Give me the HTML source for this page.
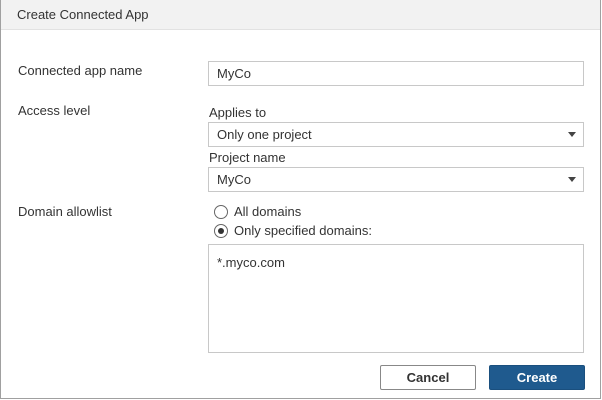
<!DOCTYPE html>
<html><head><style>
*{box-sizing:border-box;margin:0;padding:0}
body{width:602px;height:400px;background:#fff;font-family:"Liberation Sans",sans-serif;font-size:13px;color:#333;position:relative;overflow:hidden}
.frame{position:absolute;left:0;top:0;width:601px;height:399px;border:1px solid #a0a0a0;border-top:none}
.hdr{position:absolute;left:0;top:0;width:601px;height:30px;background:#f2f2f2;border-bottom:1px solid #e2e2e2}
.t{position:absolute;white-space:nowrap}
.box{position:absolute;border:1px solid #c8c8c8;background:#fff;padding-left:8px;line-height:22px}
.arr{position:absolute;right:7px;top:9px;width:0;height:0;border-left:4px solid transparent;border-right:4px solid transparent;border-top:5px solid #444}
.radio{position:absolute;width:14px;height:14px;border:1px solid #666;border-radius:50%;background:#fff}
.btn{position:absolute;height:25px;line-height:23px;text-align:center;font-weight:bold;font-size:13px;border-radius:2px}
</style></head><body>
<div class="hdr"></div>
<div class="frame"></div>
<div class="t" style="left:17px;top:7px">Create Connected App</div>
<div class="t" style="left:18px;top:63px">Connected app name</div>
<div class="box" style="left:208px;top:61px;width:376px;height:25px;padding-top:1px">MyCo</div>
<div class="t" style="left:18px;top:103px">Access level</div>
<div class="t" style="left:209px;top:105px">Applies to</div>
<div class="box" style="left:208px;top:122px;width:376px;height:25px;padding-top:1px">Only one project<div class="arr"></div></div>
<div class="t" style="left:209px;top:150px">Project name</div>
<div class="box" style="left:208px;top:167px;width:376px;height:25px;padding-top:1px">MyCo<div class="arr"></div></div>
<div class="t" style="left:18px;top:204px">Domain allowlist</div>
<div class="radio" style="left:214px;top:205px"></div>
<div class="t" style="left:234px;top:204px">All domains</div>
<div class="radio" style="left:214px;top:224px"><div style="position:absolute;left:3px;top:3px;width:6px;height:6px;border-radius:50%;background:#333"></div></div>
<div class="t" style="left:234px;top:223px">Only specified domains:</div>
<div class="box" style="left:208px;top:244px;width:376px;height:109px;padding-top:10px;line-height:16px">*.myco.com</div>
<div class="btn" style="left:380px;top:365px;width:96px;border:1px solid #888;background:#fff;color:#333">Cancel</div>
<div class="btn" style="left:489px;top:365px;width:96px;background:#1f5a8e;color:#fff;border:1px solid #1a4f7e">Create</div>
</body></html>
